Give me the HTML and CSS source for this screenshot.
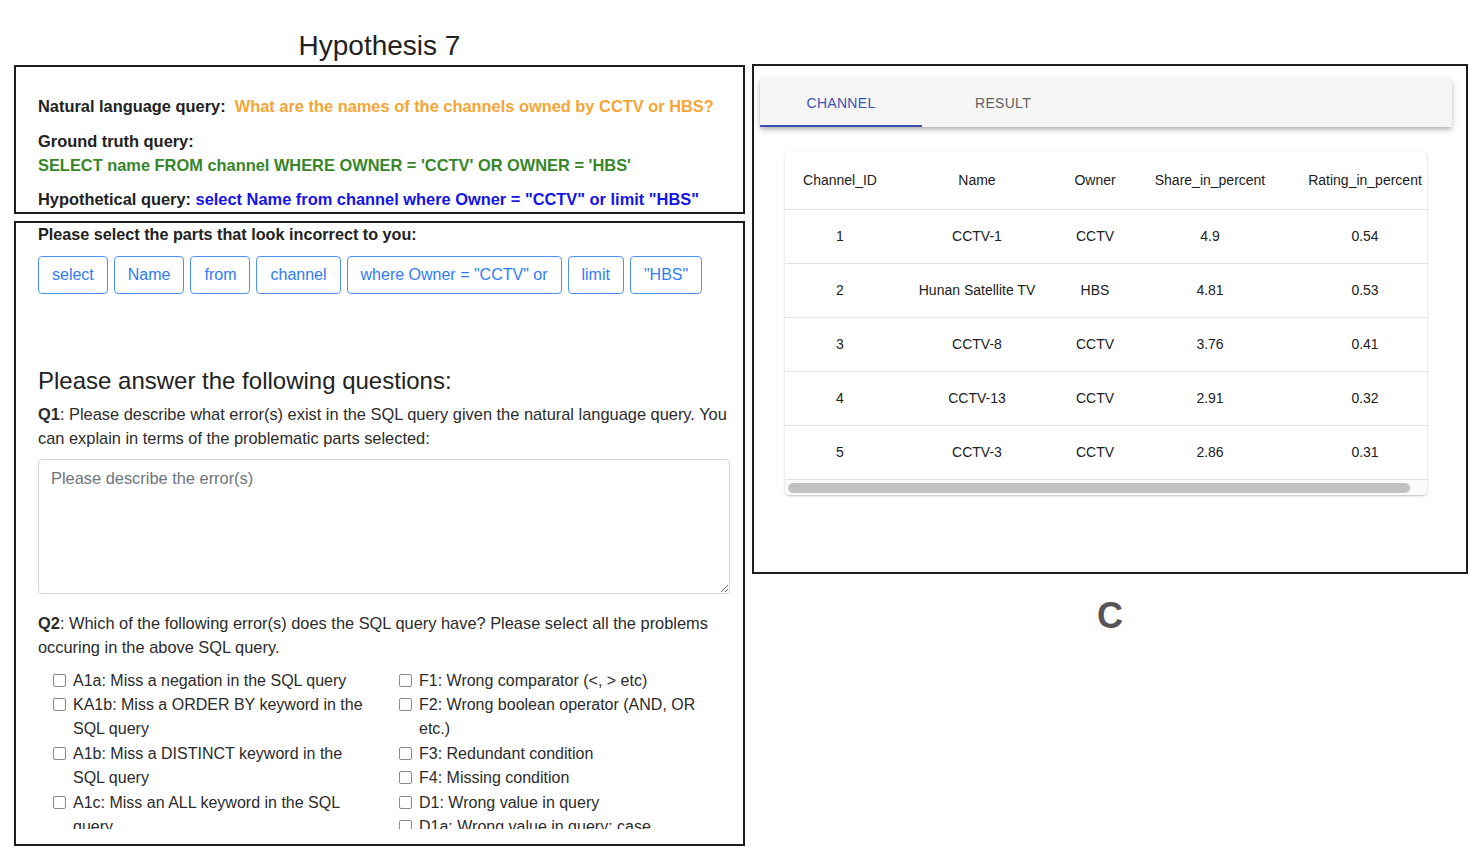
FILE: index.html
```html
<!DOCTYPE html>
<html>
<head>
<meta charset="utf-8">
<link rel="stylesheet" href="styles.css">
</head>
<body>
<div class="page">
  <div class="left-col">
    <h1 class="title">Hypothesis 7</h1>
    <div class="box query-box">
      <p class="line"><b>Natural language query:</b>&nbsp; <span class="nl">What are the names of the channels owned by CCTV or HBS?</span></p>
      <p class="line gt"><b>Ground truth query:</b><br><span class="sql-gt">SELECT name FROM channel WHERE OWNER = 'CCTV' OR OWNER = 'HBS'</span></p>
      <p class="line"><b>Hypothetical query:</b> <span class="sql-hyp">select Name from channel where Owner = "CCTV" or limit "HBS"</span></p>
    </div>
    <div class="box survey-box">
      <div class="survey-inner">
        <p class="select-label">Please select the parts that look incorrect to you:</p>
        <div class="parts">
          <button class="part">select</button>
          <button class="part">Name</button>
          <button class="part">from</button>
          <button class="part">channel</button>
          <button class="part">where Owner = "CCTV" or</button>
          <button class="part">limit</button>
          <button class="part">"HBS"</button>
        </div>
        <h2 class="answer-title">Please answer the following questions:</h2>
        <p class="q"><b>Q1</b>: Please describe what error(s) exist in the SQL query given the natural language query. You can explain in terms of the problematic parts selected:</p>
        <textarea class="desc" placeholder="Please describe the error(s)"></textarea>
        <p class="q q2"><b>Q2</b>: Which of the following error(s) does the SQL query have? Please select all the problems occuring in the above SQL query.</p>
        <div class="checks">
          <div class="col">
            <label class="check"><input type="checkbox"><span>A1a: Miss a negation in the SQL query</span></label>
            <label class="check"><input type="checkbox"><span>KA1b: Miss a ORDER BY keyword in the SQL query</span></label>
            <label class="check"><input type="checkbox"><span>A1b: Miss a DISTINCT keyword in the SQL query</span></label>
            <label class="check"><input type="checkbox"><span>A1c: Miss an ALL keyword in the SQL query</span></label>
          </div>
          <div class="col">
            <label class="check"><input type="checkbox"><span>F1: Wrong comparator (&lt;, &gt; etc)</span></label>
            <label class="check"><input type="checkbox"><span>F2: Wrong boolean operator (AND, OR etc.)</span></label>
            <label class="check"><input type="checkbox"><span>F3: Redundant condition</span></label>
            <label class="check"><input type="checkbox"><span>F4: Missing condition</span></label>
            <label class="check"><input type="checkbox"><span>D1: Wrong value in query</span></label>
            <label class="check"><input type="checkbox"><span>D1a: Wrong value in query: case</span></label>
          </div>
        </div>
      </div>
    </div>
  </div>
  <div class="right-col">
    <div class="box table-box">
      <div class="tabs">
        <div class="tab active">CHANNEL</div>
        <div class="tab">RESULT</div>
      </div>
      <div class="card">
        <div class="scroller">
          <table class="data">
            <colgroup>
              <col class="c1"><col class="c2"><col class="c3"><col class="c4"><col class="c5">
            </colgroup>
            <thead>
              <tr><th>Channel_ID</th><th>Name</th><th>Owner</th><th>Share_in_percent</th><th>Rating_in_percent</th></tr>
            </thead>
            <tbody>
              <tr><td>1</td><td>CCTV-1</td><td>CCTV</td><td>4.9</td><td>0.54</td></tr>
              <tr><td>2</td><td>Hunan Satellite TV</td><td>HBS</td><td>4.81</td><td>0.53</td></tr>
              <tr><td>3</td><td>CCTV-8</td><td>CCTV</td><td>3.76</td><td>0.41</td></tr>
              <tr><td>4</td><td>CCTV-13</td><td>CCTV</td><td>2.91</td><td>0.32</td></tr>
              <tr><td>5</td><td>CCTV-3</td><td>CCTV</td><td>2.86</td><td>0.31</td></tr>
            </tbody>
          </table>
        </div>
        <div class="hscroll"><div class="hthumb"></div></div>
      </div>
    </div>
    <div class="panel-label">C</div>
  </div>
</div>
</body>
</html>
```

FILE: styles.css
```css
* { box-sizing: border-box; }
html, body {
  margin: 0;
  padding: 0;
  background: #ffffff;
}
body {
  font-family: "Liberation Sans", Arial, sans-serif;
  color: #212529;
  width: 1480px;
  height: 868px;
  overflow: hidden;
}
.page {
  display: flex;
  gap: 7px;
  padding-left: 14px;
}
.left-col {
  width: 731px;
  display: flex;
  flex-direction: column;
}
.title {
  margin: 0;
  height: 65px;
  padding-top: 28px;
  text-align: center;
  font-weight: 400;
  font-size: 28px;
  line-height: 36px;
  color: #222;
}
.box {
  border: 2px solid #1e1e1e;
  background: #fff;
}
.query-box {
  height: 149px;
  padding: 27px 10px 0 22px;
  font-size: 16.4px;
  line-height: 24px;
}
.query-box .line {
  margin: 0 0 10px 0;
  font-weight: 700;
  white-space: nowrap;
}
.query-box .line.gt { margin-top: 11px; }
.query-box .line b { color: #222; }
.nl { color: #f5a535; }
.sql-gt { color: #37862a; }
.sql-hyp { color: #1414e8; }
.survey-box {
  margin-top: 7px;
  height: 625px;
  padding: 0 0 15px 0;
  display: flex;
  flex-direction: column;
}
.survey-inner {
  flex: 1;
  overflow: hidden;
  padding: 0 13px 0 22px;
  font-size: 16.4px;
  line-height: 24.4px;
}
.select-label {
  margin: 0;
  padding-top: 0;
  font-weight: 700;
  font-size: 16.2px;
  color: #222;
  line-height: 22px;
}
.parts {
  display: flex;
  gap: 6px;
  margin-top: 11px;
}
.part {
  height: 38px;
  padding: 0 13px;
  background: #fff;
  border: 1px solid #4f92f5;
  border-radius: 4px;
  color: #2f7cf6;
  font-family: "Liberation Sans", Arial, sans-serif;
  font-size: 16px;
}
.answer-title {
  margin: 72px 0 6px 0;
  font-size: 24px;
  font-weight: 400;
  line-height: 30px;
  color: #222;
}
.q {
  margin: 0;
  color: #2b2b2b;
}
.desc {
  display: block;
  width: 692px;
  height: 135px;
  margin-top: 8px;
  padding: 6px 12px;
  border: 1px solid #d3d6da;
  border-radius: 4px;
  font-family: "Liberation Sans", Arial, sans-serif;
  font-size: 16.4px;
  line-height: 24px;
  resize: vertical;
}
.desc::placeholder { color: #6c757d; }
.q2 { margin-top: 17px; }
.checks {
  display: grid;
  grid-template-columns: 322px 322px;
  column-gap: 24px;
  margin: 9px 0 0 15px;
}
.col {
  display: flex;
  flex-direction: column;
}
.check {
  display: flex;
  align-items: flex-start;
  gap: 7px;
  color: #2b2b2b;
  font-size: 16px;
}
.check input {
  appearance: none;
  -webkit-appearance: none;
  flex: none;
  width: 13px;
  height: 13px;
  margin: 5px 0 0 0;
  border: 1px solid #8a8a8a;
  border-radius: 2px;
  background: #fff;
}
.right-col {
  width: 716px;
  padding-top: 64px;
  display: flex;
  flex-direction: column;
}
.table-box {
  height: 510px;
  padding: 13px 14px 0 6px;
}
.tabs {
  display: flex;
  height: 48px;
  background: #f5f5f5;
  box-shadow: 0 2px 4px -1px rgba(0,0,0,0.2), 0 4px 5px 0 rgba(0,0,0,0.12), 0 1px 10px 0 rgba(0,0,0,0.08);
}
.tab {
  width: 162px;
  display: flex;
  align-items: center;
  justify-content: center;
  font-size: 14px;
  letter-spacing: 0.3px;
  color: #5f5f5f;
}
.tab.active {
  color: #3f51b5;
  border-bottom: 2px solid #3f51b5;
  padding-top: 2px;
}
.card {
  margin: 25px 25px 0 25px;
  background: #fff;
  border-radius: 4px;
  box-shadow: 0 1px 3px rgba(0,0,0,0.18), 0 1px 1px rgba(0,0,0,0.08);
  overflow: hidden;
}
.scroller {
  overflow: hidden;
}
.hscroll {
  height: 15px;
  background: #fafafa;
  padding: 3px 17px 2px 3px;
}
.hthumb {
  height: 100%;
  background: #c1c1c1;
  border-radius: 5px;
}
.data {
  border-collapse: collapse;
  table-layout: fixed;
  width: 656px;
  font-size: 14px;
  color: #212121;
  white-space: nowrap;
}
.c1 { width: 110px; }
.c2 { width: 164px; }
.c3 { width: 72px; }
.c4 { width: 158px; }
.c5 { width: 152px; }
.data th, .data td {
  padding: 0;
  text-align: center;
  border-bottom: 1px solid #e3e3e3;
  font-weight: 400;
}
.data th { height: 57px; }
.data td { height: 54px; }
.panel-label {
  margin-top: 22px;
  text-align: center;
  font-size: 36px;
  font-weight: 700;
  color: #555;
  line-height: 40px;
}
```
